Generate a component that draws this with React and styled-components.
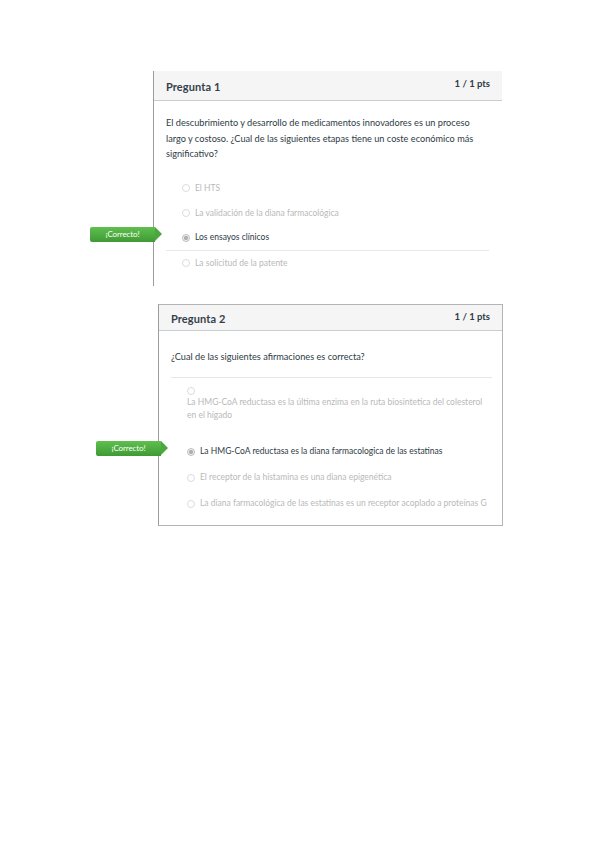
import styled, {createGlobalStyle} from 'styled-components';

const GlobalStyle = createGlobalStyle`
  html, body {
    margin: 0;
    padding: 0;
    background: #ffffff;
  }
  body {
    font-family: Lato, "Open Sans", sans-serif;
    color: #2d3b45;
  }
`;

const Page = styled.div`
  width: 599px;
  min-height: 848px;
  display: flex;
  flex-direction: column;
  padding-top: 71px;
  box-sizing: border-box;
`;

const Card = styled.section`
  position: relative;
  box-sizing: border-box;
  margin-left: ${p => p.$left}px;
  width: ${p => p.$width}px;
  border-left: 1px solid #9c9c9c;
  border-top: ${p => (p.$boxed ? '1px solid #b4b4b4' : 'none')};
  border-right: ${p => (p.$boxed ? '1px solid #b4b4b4' : 'none')};
  border-bottom: ${p => (p.$boxed ? '1px solid #b4b4b4' : 'none')};
  margin-top: ${p => p.$top || 0}px;
  padding-bottom: ${p => p.$bottom || 0}px;
`;

const Header = styled.header`
  display: flex;
  align-items: center;
  justify-content: space-between;
  height: ${p => p.$height}px;
  padding: 0 12px;
  background: #f5f5f5;
  border-bottom: 1px solid #c7cdd1;
`;

const Title = styled.h2`
  margin: 0;
  padding-top: 2px;
  font-size: 11px;
  font-weight: 700;
  color: #34414b;
  letter-spacing: 0.1px;
`;

const Points = styled.span`
  font-size: 9.5px;
  font-weight: 700;
  color: #2d3b45;
  align-self: flex-start;
  padding-top: ${p => p.$pad}px;
`;

const Body = styled.div`
  padding: ${p => p.$pad}px 13px 0 12px;
`;

const Question = styled.p`
  margin: 0;
  font-size: 9.2px;
  line-height: 15.5px;
  color: #2d3b45;
  padding-bottom: ${p => p.$gap}px;
  border-bottom: ${p => (p.$rule ? '1px solid #e6e6e6' : 'none')};
  margin-right: ${p => (p.$rule ? -3 : 0)}px;
`;

const Answers = styled.ul`
  list-style: none;
  margin: 0;
  padding: ${p => p.$pad}px 0 0 0;
`;

const Answer = styled.li`
  position: relative;
  display: flex;
  align-items: ${p => (p.$wrap ? 'flex-start' : 'center')};
  flex-direction: ${p => (p.$wrap ? 'column' : 'row')};
  gap: ${p => (p.$wrap ? 1 : 5)}px;
  min-height: ${p => p.$height || 25}px;
  margin-top: ${p => p.$space || 0}px;
  padding-left: 16px;
  box-sizing: border-box;
  border-bottom: ${p => (p.$rule ? '1px solid #e8e8e8' : 'none')};
  font-size: 8.5px;
  line-height: 13px;
  color: ${p => (p.$picked ? '#2d3b45' : '#b9b9b9')};
`;

const Radio = styled.span`
  flex: none;
  width: 6px;
  height: 6px;
  border-radius: 50%;
  border: 1px solid ${p => (p.$picked ? '#bdbdbd' : '#dcdcdc')};
  background: ${p => (p.$picked ? 'radial-gradient(circle, #b0b0b0 0 45%, #f2f2f2 55%)' : '#fff')};
`;

const Badge = styled.div`
  position: absolute;
  left: ${p => p.$left}px;
  top: 50%;
  margin-top: -11px;
  display: flex;
  align-items: center;
  justify-content: center;
  width: 65px;
  height: 15px;
  background: linear-gradient(#5fbf4f, #3f9a34);
  border-radius: 2px 0 0 2px;
  color: #ffffff;
  font-size: 8px;
  letter-spacing: -0.1px;
  &::after {
    content: '';
    position: absolute;
    right: -7px;
    top: 0;
    border-style: solid;
    border-width: 7.5px 0 7.5px 7px;
    border-color: transparent transparent transparent #4aa83f;
  }
`;

const quiz = [
  {
    title: 'Pregunta 1',
    left: 153,
    width: 349,
    question:
      'El descubrimiento y desarrollo de medicamentos innovadores es un proceso largo y costoso. ¿Cual de las siguientes etapas tiene un coste económico más significativo?',
    answers: [
      {text: 'El HTS'},
      {text: 'La validación de la diana farmacológica'},
      {text: 'Los ensayos clínicos', picked: true, rule: true},
      {text: 'La solicitud de la patente'},
    ],
  },
  {
    title: 'Pregunta 2',
    left: 158,
    width: 345,
    boxed: true,
    question: '¿Cual de las siguientes afirmaciones es correcta?',
    answers: [
      {text: 'La HMG-CoA reductasa es la última enzima en la ruta biosintetica del colesterol en el hígado', wrap: true},
      {text: 'La HMG-CoA reductasa es la diana farmacologica de las estatinas', picked: true, space: 17},
      {text: 'El receptor de la histamina es una diana epigenética', height: 27},
      {text: 'La diana farmacológica de las estatinas es un receptor acoplado a proteínas G'},
    ],
  },
];

const QuestionCard = ({item}) => {
  const boxed = item.boxed;
  return (
    <Card
      $left={item.left}
      $width={item.width}
      $boxed={boxed}
      $top={boxed ? 18 : 0}
      $bottom={boxed ? 9 : 10}
    >
      <Header $height={boxed ? 25 : 29}>
        <Title>{item.title}</Title>
        <Points $pad={boxed ? 6 : 7}>1 / 1 pts</Points>
      </Header>
      <Body $pad={boxed ? 18 : 14}>
        <Question $rule={boxed} $gap={boxed ? 13 : 0}>{item.question}</Question>
        <Answers $pad={boxed ? 9 : 14}>
          {item.answers.map(a => (
            <Answer
              key={a.text}
              $picked={a.picked}
              $rule={a.rule}
              $wrap={a.wrap}
              $space={a.space}
              $height={a.height}
            >
              {a.picked && <Badge $left={boxed ? -75 : -76}>¡Correcto!</Badge>}
              <Radio $picked={a.picked} />
              <span>{a.text}</span>
            </Answer>
          ))}
        </Answers>
      </Body>
    </Card>
  );
};

const App = () => (
  <Page>
    <GlobalStyle />
    {quiz.map(q => (
      <QuestionCard key={q.title} item={q} />
    ))}
  </Page>
);

export default App;
